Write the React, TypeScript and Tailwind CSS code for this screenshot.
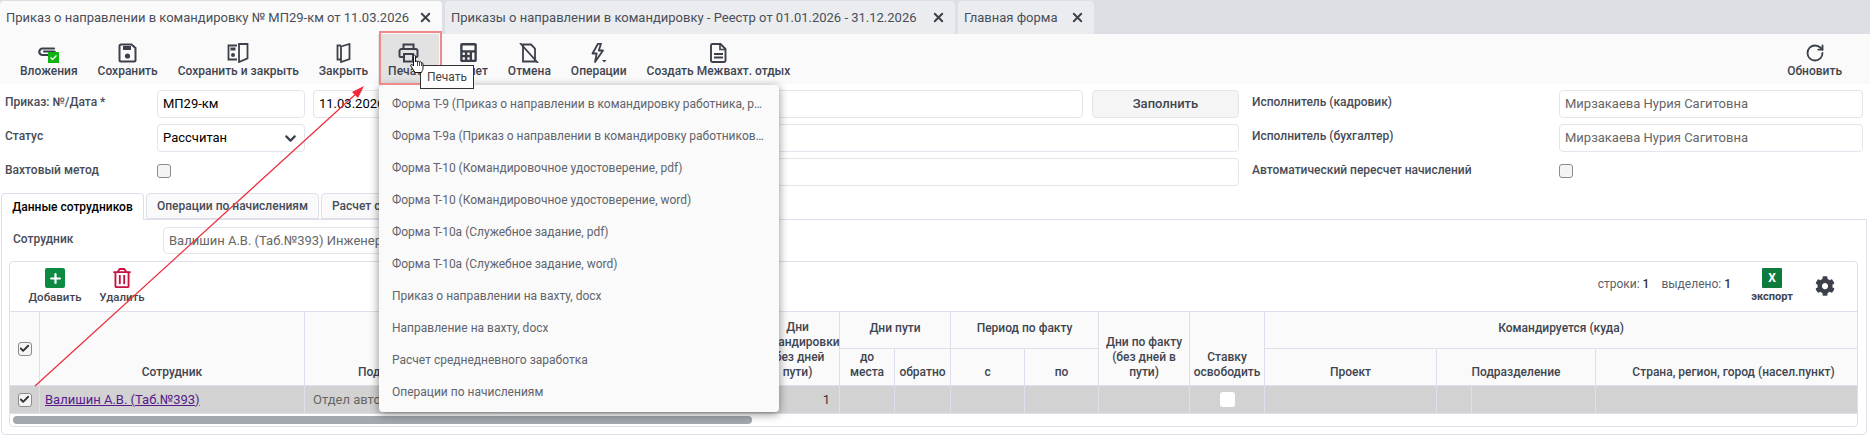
import React from 'react';
import { FaCalculator, FaCog, FaRegTrashAlt } from 'react-icons/fa';
import { Check, ChevronDown, Plus, RotateCw, X } from 'lucide-react';

const ink = '#3c404b';

const PaperclipIcon = () => (
  <svg width="23" height="17" viewBox="0 0 23 17" className="mt-[3px]">
    <path d="M17 2.500H5.500a3 3 0 0 0 0 6.500H17a1.800 1.800 0 0 0 0-3.500H7" fill="none" stroke={ink} strokeWidth="2.2" strokeLinecap="round" />
    <rect x="11" y="6" width="11" height="11" fill="#0fb30f" />
    <path d="M13.500 11.500l2 2 4-4" fill="none" stroke="#fff" strokeWidth="1.3" />
  </svg>
);

const SaveIcon = () => (
  <svg width="19" height="20" viewBox="0 0 19 20">
    <path d="M3 1.500h10.500L17.500 5v12a1.500 1.500 0 0 1-1.500 1.500H3A1.500 1.500 0 0 1 1.500 17V3A1.500 1.500 0 0 1 3 1.500z" fill="none" stroke={ink} strokeWidth="2" />
    <rect x="5" y="3" width="8" height="4" fill={ink} />
    <circle cx="9.500" cy="13" r="2.600" fill={ink} />
  </svg>
);

const SaveCloseIcon = () => (
  <svg width="22" height="20" viewBox="0 0 22 20">
    <path d="M10 2.500H1.500v14H10M12 1l8.500 -.2v14.500L12 19z" fill="none" stroke={ink} strokeWidth="1.8" />
    <rect x="3.500" y="4.500" width="5" height="3" fill={ink} />
    <circle cx="6" cy="12" r="2" fill={ink} />
  </svg>
);

const CloseIcon = () => (
  <svg width="15" height="20" viewBox="0 0 15 20">
    <path d="M5 2.500H1.500v14H5M5 3.500l8.500-2.500v15L5 19z" fill="none" stroke={ink} strokeWidth="1.8" />
  </svg>
);

const PrintIcon = () => (
  <svg width="21" height="20" viewBox="0 0 21 20">
    <path d="M5.500 6V1.500h10V6" fill="none" stroke={ink} strokeWidth="2" />
    <path d="M5 14H2.500a1 1 0 0 1-1-1V8a2 2 0 0 1 2-2h14a2 2 0 0 1 2 2v5a1 1 0 0 1-1 1H16" fill="none" stroke={ink} strokeWidth="2" />
    <rect x="6" y="11" width="9" height="7.500" fill="none" stroke={ink} strokeWidth="2" />
  </svg>
);

const CancelIcon = () => (
  <svg width="20" height="20" viewBox="0 0 20 20">
    <path d="M4 1.500h8l4 4v13H4z" fill="none" stroke={ink} strokeWidth="1.8" />
    <path d="M1 0l18 20" stroke={ink} strokeWidth="1.8" />
  </svg>
);

const BoltIcon = () => (
  <svg width="16" height="21" viewBox="0 0 16 21">
    <path d="M7 0.800L1.500 10.500h4.200L4 19 12 7.500H7.800L10 0.800z" fill="none" stroke={ink} strokeWidth="1.8" strokeLinejoin="round" />
    <path d="M11 17h4.500l-2.250 2.500z" fill={ink} />
  </svg>
);

const DocIcon = () => (
  <svg width="17" height="20" viewBox="0 0 17 20">
    <path d="M2.500 1h8l5 5v11.500a1.500 1.500 0 0 1-1.500 1.500H2.500A1.500 1.500 0 0 1 1 17.500V2.500A1.500 1.500 0 0 1 2.500 1z" fill="none" stroke={ink} strokeWidth="1.9" />
    <path d="M10 1.500V6.500h5.500" fill="none" stroke={ink} strokeWidth="1.6" />
    <path d="M4 11h9M4 14.500h9" stroke={ink} strokeWidth="1.9" />
  </svg>
);

const HandCursor = () => (
  <svg width="14" height="20" viewBox="0 0 14 20" className="absolute left-[410px] top-[54px]">
    <path d="M3.500 1.500c.8-.8 2-.4 2 .8V8c0-1.200 2-1.200 2 0 0-1 2-1 2 .2 .2-.8 2-.6 2 .6.300-.3 1.500 0 1.500 1v4.200c0 2-1 3-1.500 4.500H5L1.500 13c-1-1.200-1-2.500 0-2.500 .6 0 1.200.6 2 1.500V2.300z" fill="#fff" stroke="#000" strokeWidth=".9" />
    <path d="M7.500 8v4M9.500 8.200V12M11.500 8.800V12" stroke="#000" strokeWidth=".7" />
  </svg>
);

const toolbarItems = [
  { label: 'Вложения', icon: <PaperclipIcon /> },
  { label: 'Сохранить', icon: <SaveIcon /> },
  { label: 'Сохранить и закрыть', icon: <SaveCloseIcon /> },
  { label: 'Закрыть', icon: <CloseIcon /> },
  { label: 'Печать', icon: <PrintIcon />, active: true },
  { label: 'Расчет', icon: <FaCalculator size={19} color={ink} /> },
  { label: 'Отмена', icon: <CancelIcon /> },
  { label: 'Операции', icon: <BoltIcon /> },
  { label: 'Создать Межвахт. отдых', icon: <DocIcon /> },
];

const menuItems = [
  'Форма Т-9 (Приказ о направлении в командировку работника, pdf)',
  'Форма Т-9а (Приказ о направлении в командировку работников, pdf)',
  'Форма Т-10 (Командировочное удостоверение, pdf)',
  'Форма Т-10 (Командировочное удостоверение, word)',
  'Форма Т-10а (Служебное задание, pdf)',
  'Форма Т-10а (Служебное задание, word)',
  'Приказ о направлении на вахту, docx',
  'Направление на вахту, docx',
  'Расчет среднедневного заработка',
  'Операции по начислениям',
];

function DocTab({ title, active, width }: { title: string; active?: boolean; width: string }) {
  return (
    <div className={`${width} ${active ? 'bg-[#fafafa]' : 'bg-[#ebecef]'} h-[33px] pl-[6px] pr-[9px] flex items-center justify-between rounded-t-[4px] text-[13px] text-[#4a4e57] whitespace-nowrap`}>
      <span>{title}</span>
      <X size={15} strokeWidth={3} color={ink} />
    </div>
  );
}

function ToolButton({ label, icon, active }: { label: string; icon: React.ReactNode; active?: boolean }) {
  return (
    <div className={`${active ? 'bg-[#e2e2e2]' : ''} h-[50px] px-[10px] flex flex-col items-center`}>
      <div className="h-[20px] mt-[9px] flex items-start justify-center">{icon}</div>
      <span className="h-[16px] leading-[16px] text-[12px] font-medium text-[#3f4550] whitespace-nowrap">{label}</span>
    </div>
  );
}

function Label({ children, className = '' }: { children: React.ReactNode; className?: string }) {
  return <div className={`${className} pb-[4px] text-[12px] font-medium text-[#474c57]`}>{children}</div>;
}

function Field({ children, className = '' }: { children?: React.ReactNode; className?: string }) {
  return (
    <div className={`${className} h-[28px] px-[5px] flex items-center bg-white border border-[#e4e4ef] rounded-[4px] text-[13px] whitespace-nowrap overflow-hidden`}>
      {children}
    </div>
  );
}

function CheckBox({ checked, className = '' }: { checked?: boolean; className?: string }) {
  return (
    <span className={`${className} w-[14px] h-[14px] flex items-center justify-center rounded-[3px] border border-[#8c8c8c] bg-[#f4f4f4]`}>
      {checked && <Check size={11} strokeWidth={4} color="#333" />}
    </span>
  );
}

const th = 'border border-[#dfdfec] font-medium text-[12px] leading-[15px] text-[#3f4550] align-bottom text-center pb-[5px] px-0';
const td = 'border border-[#dfdfec] bg-[#d2d2d2] text-[13px] p-0';

export default function App() {
  return (
    <div className="relative w-[1870px] h-[436px] overflow-hidden bg-white font-['Roboto',sans-serif]">
      {/* Document tabs */}
      <div className="h-[34px] pt-px bg-[#dcdfe4] flex gap-[3px]">
        <DocTab title="Приказ о направлении в командировку № МП29-км от 11.03.2026" active width="w-[442px]" />
        <DocTab title="Приказы о направлении в командировку - Реестр от 01.01.2026 - 31.12.2026" width="w-[510px]" />
        <DocTab title="Главная форма" width="w-[136px]" />
      </div>

      {/* Toolbar */}
      <div className="h-[50px] bg-[#fafafa] flex pl-[10px] pr-[18px]">
        {toolbarItems.map((item) => (
          <ToolButton key={item.label} {...item} />
        ))}
        <div className="ml-auto">
          <ToolButton label="Обновить" icon={<RotateCw size={20} strokeWidth={2.2} color={ink} />} />
        </div>
      </div>

      {/* Form */}
      <div className="pt-[6px] pl-[5px] flex flex-col gap-[6px]">
        <div className="flex items-center h-[28px]">
          <Label className="w-[152px]">Приказ: №/Дата *</Label>
          <Field className="w-[148px]">МП29-км</Field>
          <div className="w-[926px] ml-[8px] flex gap-[9px]">
            <Field className="w-[190px]">11.03.2026</Field>
            <Field className="flex-1" />
            <div className="w-[147px] h-[28px] flex items-center justify-center rounded-[4px] border border-[#e4e4ef] bg-[#f5f5f5] text-[13px] font-medium text-[#3f4550]">Заполнить</div>
          </div>
          <Label className="w-[307px] ml-[13px]">Исполнитель (кадровик)</Label>
          <Field className="w-[304px] text-[#666]">Мирзакаева Нурия Сагитовна</Field>
        </div>
        <div className="flex items-center h-[28px]">
          <Label className="w-[152px]">Статус</Label>
          <Field className="w-[148px] justify-between">
            Рассчитан
            <ChevronDown size={17} strokeWidth={3} color={ink} />
          </Field>
          <Field className="w-[726px] ml-[208px]" />
          <Label className="w-[307px] ml-[13px]">Исполнитель (бухгалтер)</Label>
          <Field className="w-[304px] text-[#666]">Мирзакаева Нурия Сагитовна</Field>
        </div>
        <div className="flex items-center h-[28px]">
          <Label className="w-[152px]">Вахтовый метод</Label>
          <div className="w-[148px] pb-[2px]">
            <CheckBox />
          </div>
          <Field className="w-[726px] ml-[208px]" />
          <Label className="w-[307px] ml-[13px]">Автоматический пересчет начислений</Label>
          <div className="pb-[2px]">
            <CheckBox />
          </div>
        </div>
      </div>

      {/* Inner tabs */}
      <div className="mt-[7px] ml-px w-[1866px] relative z-10 flex gap-[2px] h-[27px] -mb-px">
        <div className="w-[143px] h-[27px] flex items-center justify-center bg-white border border-b-0 border-[#dfdfec] rounded-t-[4px] text-[12px] font-medium text-black">Данные сотрудников</div>
        <div className="w-[173px] h-[26px] flex items-center justify-center bg-[#fafafa] border border-[#dfdfec] rounded-t-[4px] text-[12px] font-medium text-[#474c57]">Операции по начислениям</div>
        <div className="w-[180px] h-[26px] pl-[10px] flex items-center bg-[#fafafa] border border-[#dfdfec] rounded-t-[4px] text-[12px] font-medium text-[#474c57] whitespace-nowrap">Расчет среднего заработка</div>
      </div>

      {/* Tab panel */}
      <div className="ml-px w-[1866px] h-[216px] border border-[#dfdfec] rounded-b-[4px] pt-[7px] pl-[7px]">
        <div className="flex items-center h-[27px] mb-[7px]">
          <div className="w-[154px] pl-[4px] pb-[3px] text-[12px] font-medium text-[#474c57]">Сотрудник</div>
          <Field className="w-[560px] !h-[27px] text-[#666]">Валишин А.В. (Таб.№393) Инженер</Field>
        </div>

        {/* Grid */}
        <div className="w-[1849px] h-[166px] border border-[#dfdfec] rounded-[4px] flex flex-col overflow-hidden">
          <div className="h-[49px] shrink-0 flex">
            <div className="w-[90px] pt-[6px] flex flex-col items-center">
              <span className="w-[20px] h-[20px] rounded-[2px] bg-[#0b8a43] flex items-center justify-center">
                <Plus size={15} strokeWidth={3.5} color="#fff" />
              </span>
              <span className="text-[11.5px] leading-[16px] mt-px font-medium text-[#3f4550]">Добавить</span>
            </div>
            <div className="w-[44px] pt-[6px] flex flex-col items-center">
              <FaRegTrashAlt size={20} color="#c9123f" />
              <span className="text-[11.5px] leading-[16px] mt-px font-medium text-[#3f4550] whitespace-nowrap">Удалить</span>
            </div>
            <div className="ml-auto flex items-start pr-[22px]">
              <div className="mt-[14px] text-[12px] leading-[16px] text-[#5a5f6a] whitespace-nowrap">
                строки: <b className="font-medium text-[#333]">1</b>
                <span className="ml-[12px]">выделено: <b className="font-medium text-[#333]">1</b></span>
              </div>
              <div className="ml-[20px] w-[42px] pt-[6px] flex flex-col items-center">
                <span className="w-[20px] h-[20px] rounded-[1px] bg-[#0e7a3b] flex items-center justify-center text-white font-bold text-[12px]">X</span>
                <span className="text-[11px] leading-[14px] mt-[2px] font-bold text-[#3f4550]">экспорт</span>
              </div>
              <FaCog size={20} color={ink} className="ml-[22px] mt-[14px]" />
            </div>
          </div>

          <table className="table-fixed border-collapse w-[1848px] shrink-0 -mx-px">
            <colgroup>
              <col className="w-[30px]" />
              <col className="w-[265px]" />
              <col className="w-[196px]" />
              <col className="w-[255px]" />
              <col className="w-[84px]" />
              <col className="w-[55px]" />
              <col className="w-[56px]" />
              <col className="w-[74px]" />
              <col className="w-[74px]" />
              <col className="w-[91px]" />
              <col className="w-[75px]" />
              <col className="w-[172px]" />
              <col className="w-[35px]" />
              <col className="w-[124px]" />
              <col className="w-[262px]" />
            </colgroup>
            <thead className="bg-[#fafafa]">
              <tr className="h-[37px]">
                <th rowSpan={2} className={`${th} !align-middle !pb-0`}>
                  <CheckBox checked className="mx-auto" />
                </th>
                <th rowSpan={2} className={th}>Сотрудник</th>
                <th rowSpan={2} className={th}>Подразделение</th>
                <th rowSpan={2} className={th}></th>
                <th rowSpan={2} className={th}>Дни командировки (без дней пути)</th>
                <th colSpan={2} className={`${th} !align-middle !pb-[3px]`}>Дни пути</th>
                <th colSpan={2} className={`${th} !align-middle !pb-[3px]`}>Период по факту</th>
                <th rowSpan={2} className={th}>Дни по факту (без дней в пути)</th>
                <th rowSpan={2} className={th}>Ставку освободить</th>
                <th colSpan={4} className={`${th} !align-middle !pb-[3px]`}>Командируется (куда)</th>
              </tr>
              <tr className="h-[37px]">
                <th className={th}>до<br />места</th>
                <th className={th}>обратно</th>
                <th className={th}>с</th>
                <th className={th}>по</th>
                <th className={th}>Проект</th>
                <th colSpan={2} className={th}>Подразделение</th>
                <th className={`${th} !pl-[14px]`}>Страна, регион, город (насел.пункт)</th>
              </tr>
            </thead>
            <tbody>
              <tr className="h-[28px]">
                <td className={`${td} bg-[#cecece]`}>
                  <CheckBox checked className="mx-auto" />
                </td>
                <td className={`${td} bg-[#cecece] pl-[5px] text-[#551a8b] underline`}>Валишин А.В. (Таб.№393)</td>
                <td className={`${td} pl-[8px] text-[#666]`}>Отдел автоматизации</td>
                <td className={td}></td>
                <td className={`${td} text-right pr-[9px] text-[#333]`}>1</td>
                <td className={td}></td>
                <td className={td}></td>
                <td className={td}></td>
                <td className={td}></td>
                <td className={td}></td>
                <td className={td}>
                  <span className="block w-[15px] h-[15px] mx-auto bg-white rounded-[3px]" />
                </td>
                <td className={td}></td>
                <td className={td}></td>
                <td className={td}></td>
                <td className={td}></td>
              </tr>
            </tbody>
          </table>

          {/* Horizontal scrollbar */}
          <div className="mt-[2px] ml-[3px] w-[739px] h-[8px] rounded-full bg-[#a3a7ae] shrink-0" />
        </div>
      </div>

      {/* Print dropdown */}
      <div className="absolute z-20 left-[379px] top-[85px] w-[400px] h-[327px] pt-[3px] bg-[#fafafa] rounded-[4px] shadow-[0_2px_10px_rgba(0,0,0,0.45)]">
        {menuItems.map((item) => (
          <div key={item} className="h-[32px] pl-[13px] pr-[14px] flex items-center text-[12px] text-[#60646c]">
            <span className="truncate">{item}</span>
          </div>
        ))}
      </div>

      {/* Annotation on the print button */}
      <div className="absolute z-30 left-[379px] top-[31px] w-[63px] h-[54px] border-2 border-[#f08a8a]" />
      <div className="absolute z-30 left-[420px] top-[65px] w-[54px] h-[24px] flex items-center justify-center bg-white border border-[#333] text-[12px] text-[#444]">Печать</div>
      <div className="z-40 absolute inset-0 pointer-events-none">
        <HandCursor />
        <svg width="1870" height="436" className="absolute inset-0">
          <line x1="35" y1="386" x2="358" y2="92" stroke="#ee2b3b" strokeWidth="1.2" />
          <path d="M364 86L352 92L358 98z" fill="#ee2b3b" />
        </svg>
      </div>
    </div>
  );
}
